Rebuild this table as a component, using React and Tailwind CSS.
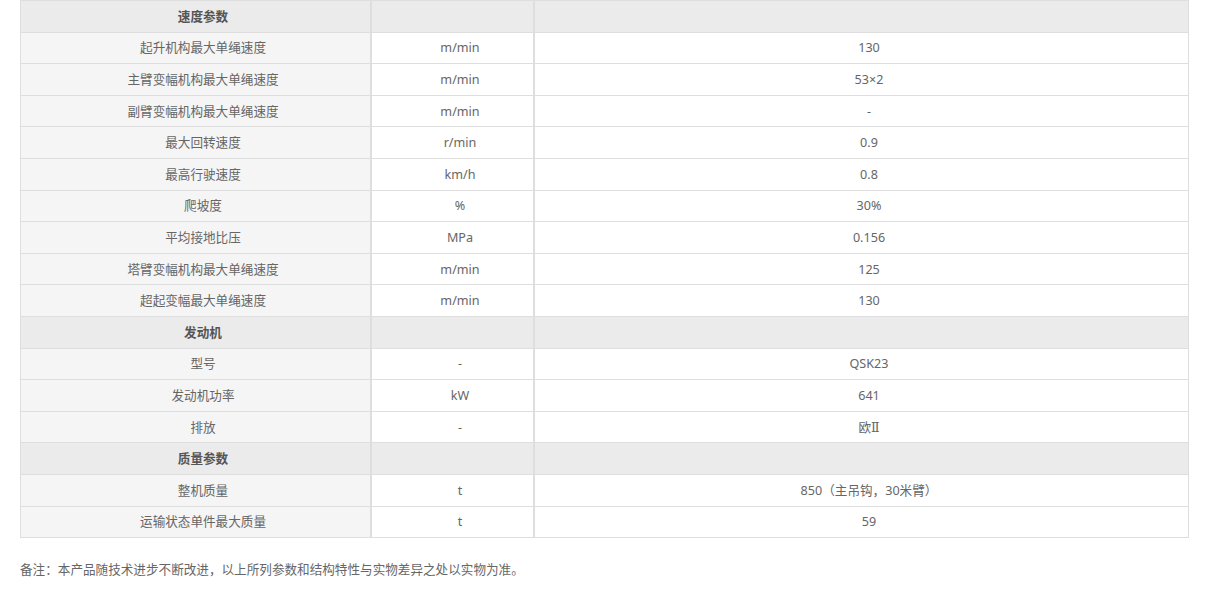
import React from "react";

const rows = [
  { h: true, a: "速度参数" },
  { a: "起升机构最大单绳速度", b: "m/min", c: "130" },
  { a: "主臂变幅机构最大单绳速度", b: "m/min", c: "53×2" },
  { a: "副臂变幅机构最大单绳速度", b: "m/min", c: "-" },
  { a: "最大回转速度", b: "r/min", c: "0.9" },
  { a: "最高行驶速度", b: "km/h", c: "0.8" },
  { a: "爬坡度", b: "%", c: "30%" },
  { a: "平均接地比压", b: "MPa", c: "0.156" },
  { a: "塔臂变幅机构最大单绳速度", b: "m/min", c: "125" },
  { a: "超起变幅最大单绳速度", b: "m/min", c: "130" },
  { h: true, a: "发动机" },
  { a: "型号", b: "-", c: "QSK23" },
  { a: "发动机功率", b: "kW", c: "641" },
  {
    a: "排放",
    b: "-",
    c: (
      <>
        欧<span style={{ fontFamily: '"DejaVu Serif", serif' }}>Ⅱ</span>
      </>
    ),
  },
  { h: true, a: "质量参数" },
  { a: "整机质量", b: "t", c: "850（主吊钩，30米臂）" },
  { a: "运输状态单件最大质量", b: "t", c: "59" },
];

export default function App() {
  return (
    <div
      className="w-[1215px] h-[602px] bg-white text-[12.6px] text-[#666]"
      style={{ fontFamily: '"Noto Sans", "Noto Sans CJK SC", sans-serif' }}
    >
      <div className="ml-[20px] w-[1169px] bg-[#dedede] p-[1px] grid grid-cols-[349px_161px_653px] gap-x-[2px] gap-y-[1px]">
        {rows.map((r, i) =>
          r.h ? (
            <React.Fragment key={i}>
              <div className="h-[30.6px] pl-[15px] pt-[2px] bg-[#ebebeb] flex items-center justify-center font-bold text-[#555]">
                {r.a}
              </div>
              <div className="h-[30.6px] bg-[#ebebeb]" />
              <div className="h-[30.6px] bg-[#ebebeb]" />
            </React.Fragment>
          ) : (
            <React.Fragment key={i}>
              <div className="h-[30.6px] pl-[15px] pt-[2px] bg-[#f5f5f5] flex items-center justify-center">
                {r.a}
              </div>
              <div className="h-[30.6px] pl-[15px] pt-[2px] bg-white flex items-center justify-center">
                {r.b}
              </div>
              <div className="h-[30.6px] pl-[15px] pt-[2px] bg-white flex items-center justify-center">
                {r.c}
              </div>
            </React.Fragment>
          )
        )}
      </div>
      <p className="ml-[20px] mt-[22px] leading-[20px]">
        备注：本产品随技术进步不断改进，以上所列参数和结构特性与实物差异之处以实物为准。
      </p>
    </div>
  );
}
